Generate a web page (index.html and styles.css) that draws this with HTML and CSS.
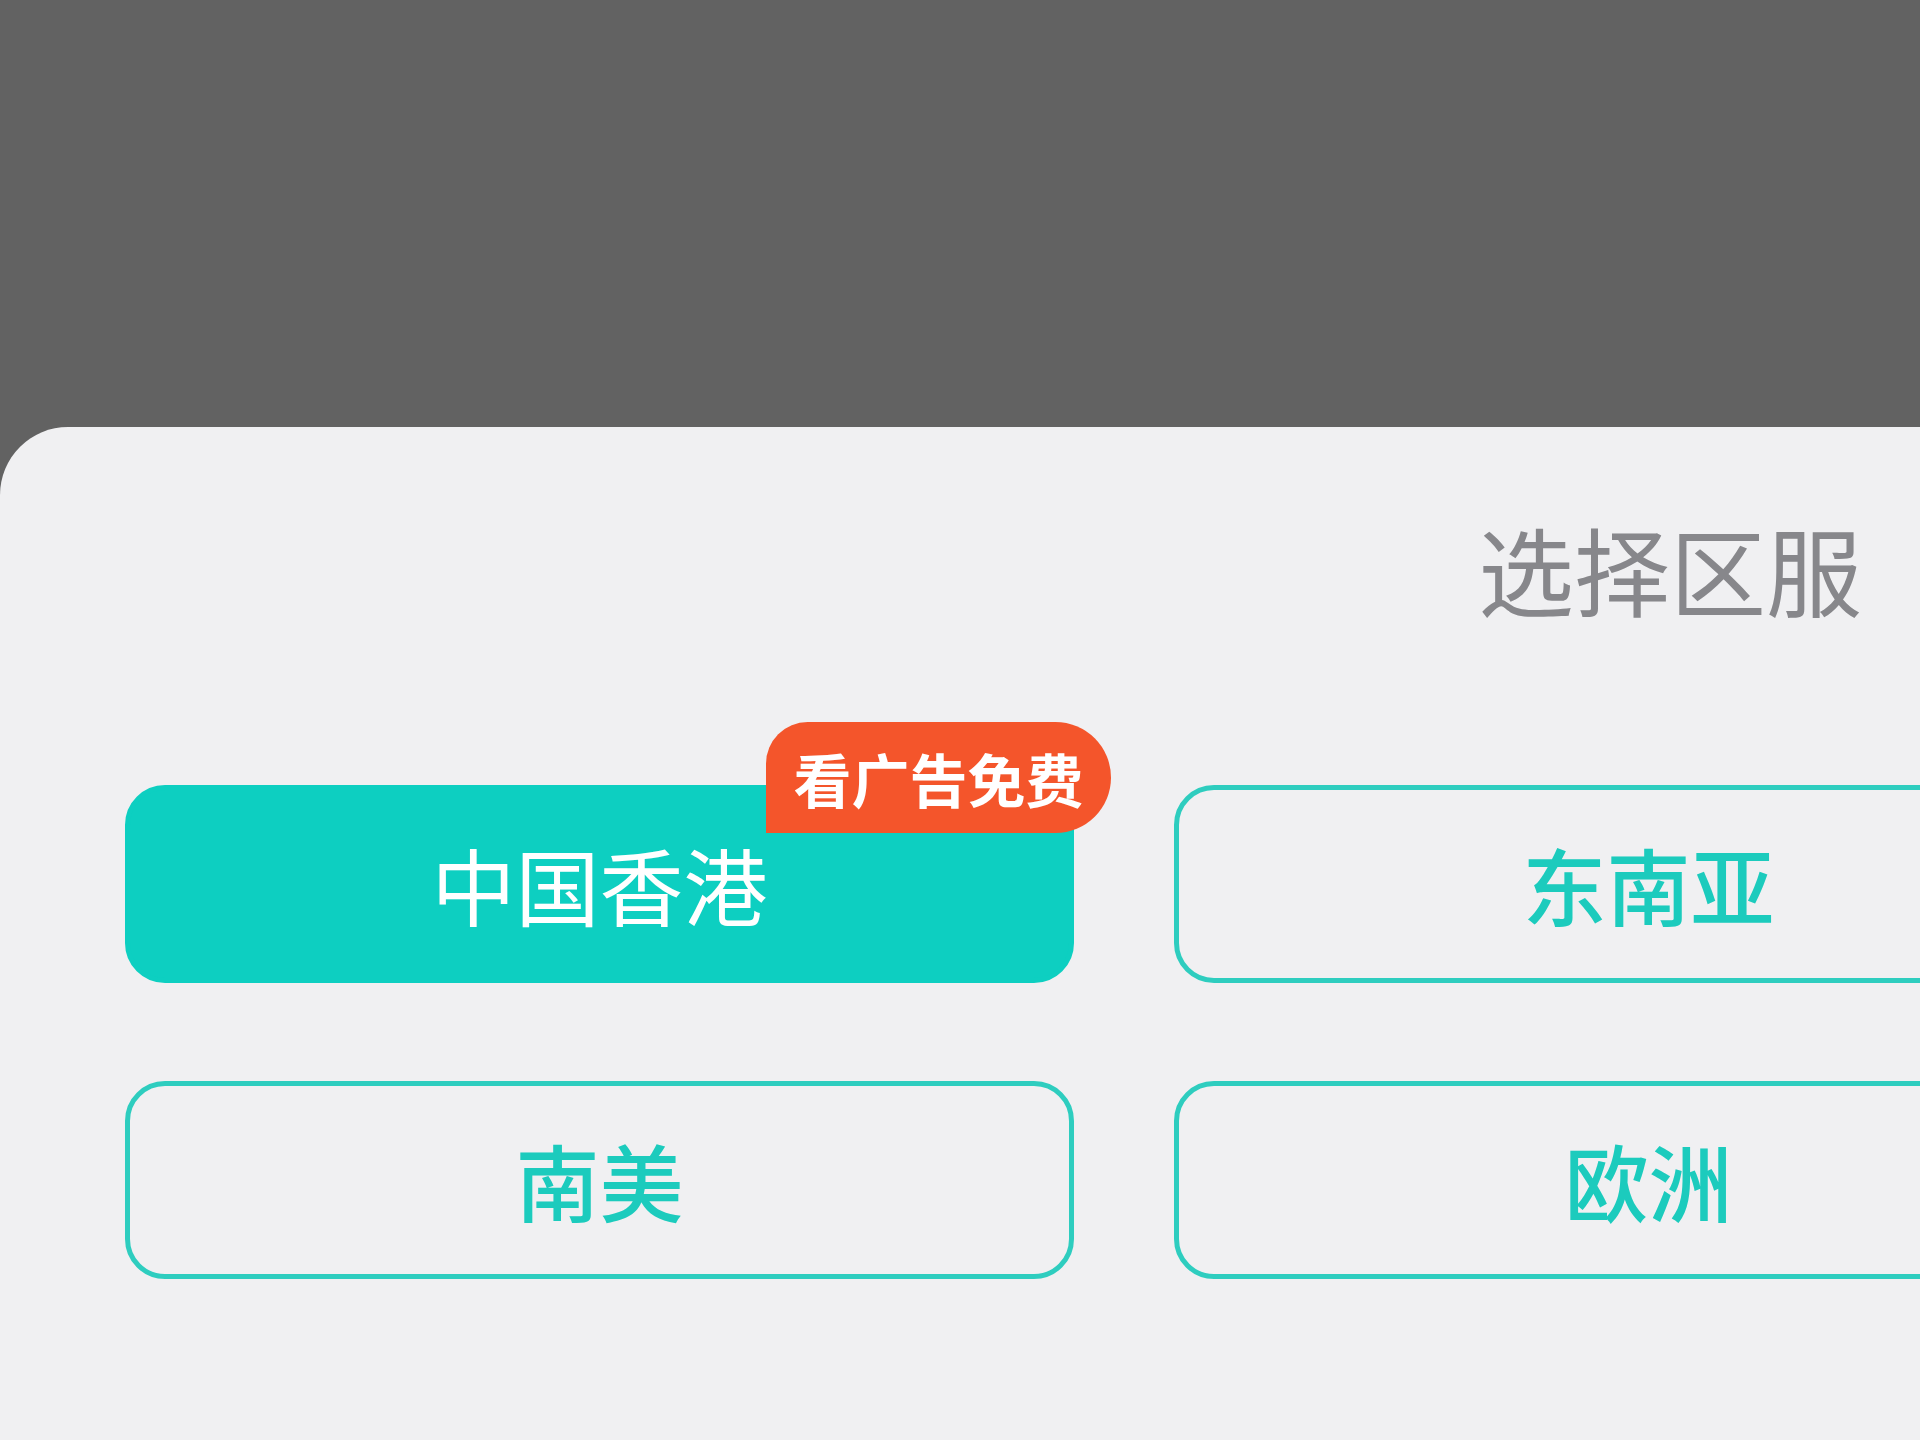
FILE: index.html
```html
<!DOCTYPE html>
<html lang="zh-CN">
<head>
<meta charset="utf-8">
<title>选择区服</title>
<link rel="stylesheet" href="styles.css">
</head>
<body>
<div class="backdrop"></div>
<div class="sheet">
  <div class="title">选择区服</div>
  <div class="grid">
    <div class="btn btn-active">中国香港<span class="badge">看广告免费</span></div>
    <div class="btn">东南亚</div>
    <div class="btn">南美</div>
    <div class="btn">欧洲</div>
  </div>
</div>
</body>
</html>
```
FILE: styles.css
```css
html, body {
  margin: 0;
  padding: 0;
}
body {
  width: 1920px;
  height: 1440px;
  overflow: hidden;
  background: #626262;
  font-family: "Noto Sans CJK SC", "Noto Sans", sans-serif;
}
.backdrop {
  height: 427px;
}
.sheet {
  height: 1013px;
  background: #f0f0f2;
  border-radius: 68px 0 0 0;
  overflow: hidden;
  box-sizing: border-box;
  padding-top: 93px;
}
.title {
  text-align: right;
  padding-right: 58px;
  font-size: 96px;
  line-height: 96px;
  color: #87878b;
  font-weight: 400;
}
.grid {
  margin-top: 169px;
  padding-left: 125px;
  display: grid;
  grid-template-columns: 949px 949px;
  grid-auto-rows: 198px;
  column-gap: 100px;
  row-gap: 98px;
}
.btn {
  position: relative;
  box-sizing: border-box;
  display: flex;
  align-items: center;
  justify-content: center;
  border: 5px solid #2ecdbf;
  border-radius: 40px;
  color: #1ccbbd;
  font-size: 84px;
  font-weight: 500;
  line-height: 1;
}
.btn-active {
  background: #0dcfc1;
  border-color: #0dcfc1;
  color: #ffffff;
  font-weight: 400;
}
.badge {
  position: absolute;
  left: 636px;
  top: -68px;
  width: 345px;
  height: 111px;
  display: flex;
  align-items: center;
  justify-content: center;
  background: #f4552b;
  color: #ffffff;
  font-size: 58px;
  font-weight: 700;
  border-radius: 42px 56px 56px 0;
}
```
